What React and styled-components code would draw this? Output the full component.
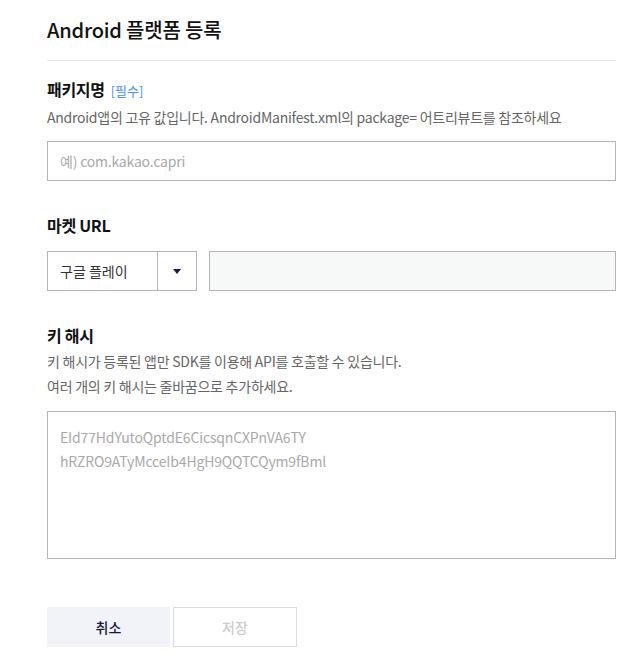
import React from 'react';
import styled, {createGlobalStyle} from 'styled-components';

const GlobalStyle = createGlobalStyle`
  body {
    margin: 0;
    background: #fff;
    font-family: "Noto Sans CJK KR", "Noto Sans", sans-serif;
    color: #1e1e1e;
  }
`;

const Page = styled.div`
  width: 569px;
  padding: 14px 0 24px 47px;
`;

const Title = styled.h2`
  margin: 0;
  font-size: 20px;
  font-weight: 500;
  line-height: 32px;
  padding-bottom: 14px;
  border-bottom: 1px solid #e5e5e5;
  color: #111;
  letter-spacing: -0.2px;
`;

const Section = styled.section`
  margin-top: ${props => props.top}px;
`;

const Label = styled.div`
  font-size: 16px;
  font-weight: 700;
  line-height: 24px;
  color: #111;
  letter-spacing: -0.3px;
`;

const Required = styled.span`
  margin-left: 6px;
  font-size: 13px;
  font-weight: 400;
  color: #4a90f5;
  letter-spacing: 0;
`;

const Desc = styled.p`
  margin: 2px 0 0;
  font-size: 14px;
  letter-spacing: -0.25px;
  line-height: 25px;
  color: #666;
`;

const TextInput = styled.input`
  display: block;
  box-sizing: border-box;
  width: 100%;
  height: 40px;
  margin-top: ${props => props.top || 0}px;
  padding: 0 12px;
  border: 1px solid #b5b5b5;
  background: ${props => props.disabled ? '#f7f8f8' : '#fff'};
  font-family: inherit;
  font-size: 14px;
  letter-spacing: -0.2px;
  color: #333;
  outline: none;
  &::placeholder { color: #aaa; }
`;

const Row = styled.div`
  display: flex;
  gap: 12px;
  margin-top: 14px;
`;

const Select = styled.div`
  flex: 0 0 150px;
  box-sizing: border-box;
  height: 40px;
  display: flex;
  border: 1px solid #b5b5b5;
  font-size: 14px;
  color: #333;
`;

const SelectValue = styled.div`
  flex: 1;
  display: flex;
  align-items: center;
  padding-left: 12px;
  border-right: 1px solid #b5b5b5;
`;

const SelectArrow = styled.div`
  flex: 0 0 38px;
  display: flex;
  align-items: center;
  justify-content: center;
`;

const TextArea = styled.textarea`
  display: block;
  box-sizing: border-box;
  width: 100%;
  height: 148px;
  margin-top: 12px;
  padding: 13px 12px;
  border: 1px solid #b5b5b5;
  resize: none;
  font-family: inherit;
  font-size: 14px;
  letter-spacing: -0.15px;
  line-height: 24px;
  outline: none;
  &::placeholder { color: #aaa; }
`;

const Buttons = styled.div`
  display: flex;
  gap: 3px;
  margin-top: 48px;
`;

const Button = styled.button`
  width: ${props => props.primary ? 123 : 124}px;
  height: 40px;
  font-family: inherit;
  font-size: 14px;
  font-weight: 500;
  border: 1px solid ${props => props.primary ? '#f2f3f8' : '#dcdcdc'};
  background: ${props => props.primary ? '#f2f3f8' : '#fff'};
  color: ${props => props.primary ? '#1a1a3a' : '#ccc'};
  cursor: pointer;
`;

export default function App() {
  return <Page>
    <GlobalStyle />
    <Title>Android 플랫폼 등록</Title>

    <Section top={16}>
      <Label>패키지명<Required>[필수]</Required></Label>
      <Desc>Android앱의 고유 값입니다. AndroidManifest.xml의 package= 어트리뷰트를 참조하세요</Desc>
      <TextInput top={11} placeholder="예) com.kakao.capri" />
    </Section>

    <Section top={32}>
      <Label>마켓 URL</Label>
      <Row>
        <Select>
          <SelectValue>구글 플레이</SelectValue>
          <SelectArrow>
            <svg width="8" height="5" viewBox="0 0 8 5">
              <path d="M0 0h8L4 5z" fill="#1a1a5a" />
            </svg>
          </SelectArrow>
        </Select>
        <TextInput disabled />
      </Row>
    </Section>

    <Section top={32}>
      <Label>키 해시</Label>
      <Desc>키 해시가 등록된 앱만 SDK를 이용해 API를 호출할 수 있습니다.<br />여러 개의 키 해시는 줄바꿈으로 추가하세요.</Desc>
      <TextArea placeholder={'EId77HdYutoQptdE6CicsqnCXPnVA6TY\nhRZRO9ATyMcceIb4HgH9QQTCQym9fBml'} />
    </Section>

    <Buttons>
      <Button primary>취소</Button>
      <Button>저장</Button>
    </Buttons>
  </Page>;
}
